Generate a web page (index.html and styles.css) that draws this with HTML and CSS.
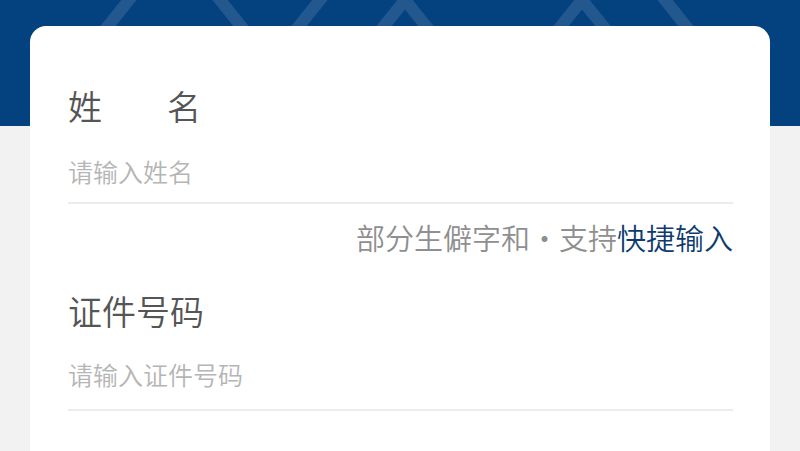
FILE: index.html
```html
<!DOCTYPE html>
<html lang="zh-CN">
<head>
    <meta charset="UTF-8">
    <meta name="viewport" content="width=device-width, initial-scale=1.0">
    <title>实名信息</title>
    <link rel="stylesheet" href="styles.css">
</head>
<body>
    <div class="banner">
        <svg class="banner-lines" width="800" height="126" viewBox="0 0 800 126">
            <g stroke="rgba(255,255,255,0.12)" stroke-width="12" fill="none">
                <line x1="145" y1="-20" x2="100" y2="36" />
                <line x1="204" y1="-20" x2="249" y2="36" />
                <line x1="336" y1="-20" x2="291" y2="36" />
                <polyline points="376,36 405,0 434,36" />
                <polyline points="553,36 582,0 611,36" />
                <line x1="649" y1="-20" x2="694" y2="36" />
            </g>
        </svg>
    </div>
    <div class="card">
        <div class="field">
            <label class="field-label spread" for="name"><span>姓</span><span>名</span></label>
            <input class="field-input" id="name" type="text" placeholder="请输入姓名">
        </div>
        <p class="hint">部分生僻字和·支持<a href="#">快捷输入</a></p>
        <div class="field field-id">
            <label class="field-label" for="idNo">证件号码</label>
            <input class="field-input" id="idNo" type="text" placeholder="请输入证件号码">
        </div>
    </div>
</body>
</html>
```

FILE: styles.css
```css
/* Page */
body {
    margin: 0;
    background-color: #f2f2f2;
    font-family: "Noto Sans CJK SC", "Noto Sans", sans-serif;
    overflow: hidden;
}

/* Blue banner behind the card */
.banner {
    position: relative;
    height: 126px;
    background-color: #04417f;
    overflow: hidden;
}
.banner-lines {
    position: absolute;
    top: 0;
    left: 0;
}

/* Form card */
.card {
    position: relative;
    margin: -100px 30px 0;
    min-height: 500px;
    background: #fff;
    border-radius: 16px;
    padding: 58px 37px 0 38px;
}

.field-label {
    display: block;
    font-size: 34px;
    font-weight: 350;
    line-height: 44px;
    color: #555;
}
.spread {
    display: flex;
    justify-content: space-between;
    width: 133px;
}

.field-input {
    display: block;
    box-sizing: content-box;
    width: 100%;
    height: 46px;
    margin-top: 20px;
    padding: 0 0 8px;
    border: none;
    border-bottom: 2px solid #ececec;
    font-family: inherit;
    font-size: 25px;
    font-weight: 350;
    color: #333;
    outline: none;
}
.field-input::placeholder {
    color: #b5b5b5;
}

/* Rare characters hint */
.hint {
    margin: 15px 0 0;
    text-align: right;
    font-size: 29px;
    font-weight: 350;
    line-height: 36px;
    color: #8f8f8f;
}
.hint a {
    color: #0d3b6e;
    text-decoration: none;
}

.field-id {
    margin-top: 34px;
}
.field-id .field-input {
    margin-top: 18px;
    padding-bottom: 12px;
}
```
